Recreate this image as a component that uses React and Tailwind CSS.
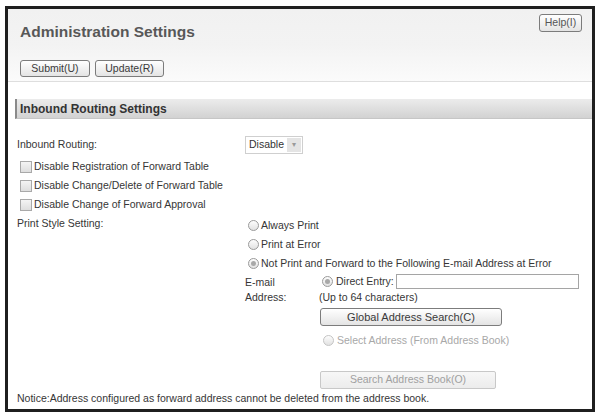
import React from 'react'

// Admin settings – inbound routing page
const FONT = { fontFamily: '"Liberation Sans", Arial, sans-serif' }

function Radio({ checked, muted }) {
  return (
    <span className={`inline-flex items-center justify-center w-[11px] h-[11px] rounded-full border ${muted ? 'border-[#c4c4c4]' : 'border-[#9a9a9a]'} bg-gradient-to-b from-[#fdfdfd] to-[#e2e2e2] shrink-0`}>
      {checked && <span className="w-[5px] h-[5px] rounded-full bg-[#a8a8a8]" />}
    </span>
  )
}

function Check() {
  return <span className="inline-block w-[12px] h-[12px] border border-[#a9a9a9] bg-gradient-to-b from-[#f4f4f4] to-[#dedede] shrink-0" />
}

function Btn({ children, className = '' }) {
  return (
    <span className={`inline-flex items-center justify-center h-[17px] border border-[#7c7c7c] rounded-[3px] bg-gradient-to-b from-[#ffffff] to-[#e4e4e4] text-[10.5px] text-[#3a3a3a] whitespace-nowrap ${className}`}>
      {children}
    </span>
  )
}

const CHECKS = [
  'Disable Registration of Forward Table',
  'Disable Change/Delete of Forward Table',
  'Disable Change of Forward Approval',
]

const RADIOS = [
  { label: 'Always Print', checked: false },
  { label: 'Print at Error', checked: false },
  { label: 'Not Print and Forward to the Following E-mail Address at Error', checked: true },
]

export default function App() {
  return (
    <div className="w-[598px] h-[415px] bg-white pl-[5px] pt-[6px]" style={FONT}>
      <div className="w-[590px] h-[406px] border-[3px] border-[#1f1f1f] bg-white flex flex-col text-[10.5px] text-[#363636]">

        {/* ── Cabecera ── */}
        <div className="relative h-[73px] bg-gradient-to-b from-[#f1f1f1] via-[#f3f3f3] to-[#fbfbfb] border-b border-[#dedede] px-[12px] pt-[12px]">
          <h1 className="text-[15.5px] leading-[22px] font-bold text-[#585858]">Administration Settings</h1>
          <div className="flex gap-[5px] mt-[17px]">
            <Btn className="w-[70px]">Submit(U)</Btn>
            <Btn className="w-[69px]">Update(R)</Btn>
          </div>
          <Btn className="absolute right-[10px] top-[5px] w-[43px] h-[18px] text-[#555]">Help(I)</Btn>
        </div>

        {/* ── Barra de sección ── */}
        <div className="mt-[17px] ml-[7px] h-[20px] flex items-center border-l-2 border-[#8a8a8a] bg-gradient-to-b from-[#ececec] to-[#d2d2d2] border-b border-b-[#c6c6c6] pl-[3px]">
          <span className="font-bold text-[#333] text-[12px]">Inbound Routing Settings</span>
        </div>

        {/* ── Contenido ── */}
        <div className="pl-[9px] pr-[12px]">
          <div className="flex items-center h-[19px] mt-[16px]">
            <span className="w-[228px]">Inbound Routing:</span>
            <span className="inline-flex items-center h-[18px] w-[58px] border border-[#cfcfcf] bg-white pl-[3px] text-[#333]">
              Disable
              <span className="ml-auto mr-[1px] w-[14px] h-[14px] bg-[#e4e4e4] text-[#9a9a9a] flex items-center justify-center text-[8px]">▾</span>
            </span>
          </div>

          <div className="mt-[3px]">
            {CHECKS.map(c => (
              <div key={c} className="flex items-center gap-[2px] h-[19px] pl-[3px]">
                <Check />
                <span>{c}</span>
              </div>
            ))}
          </div>

          <div className="flex">
            <span className="w-[231px] leading-[19px]">Print Style Setting:</span>
            <div className="pt-[2px]">
              {RADIOS.map(r => (
                <div key={r.label} className="flex items-center gap-[2px] h-[19px]">
                  <Radio checked={r.checked} />
                  <span>{r.label}</span>
                </div>
              ))}
            </div>
          </div>

          <div className="flex pl-[228px] mt-[1px]">
            <div className="w-[75px] leading-[15px] pt-[1px] shrink-0">E-mail<br />Address:</div>
            <div className="flex flex-col">
              <div className="flex items-center h-[15px] pl-[2px] whitespace-nowrap">
                <Radio checked />
                <span className="ml-[3px]">Direct Entry:</span>
                <span className="ml-[2px] w-[183px] h-[15px] border border-[#a5a5a5] bg-white shrink-0" />
              </div>
              <div className="leading-[15px] mt-[1px] -ml-[1px]">(Up to 64 characters)</div>
              <Btn className="w-[182px] h-[18px] mt-[3px] text-[11px]">Global Address Search(C)</Btn>
              <div className="flex items-center gap-[3px] h-[15px] mt-[7px] pl-[3px] text-[#a8a8a8]">
                <Radio muted />
                <span>Select Address (From Address Book)</span>
              </div>
              <span className="inline-flex items-center justify-center w-[176px] h-[18px] mt-[23px] border border-[#c8c8c8] rounded-[2px] bg-gradient-to-b from-[#f7f7f7] to-[#ececec] text-[#a0a0a0]">
                Search Address Book(O)
              </span>
            </div>
          </div>

          <div className="mt-[2px] leading-[15px]">
            Notice:Address configured as forward address cannot be deleted from the address book.
          </div>
        </div>
      </div>
    </div>
  )
}
